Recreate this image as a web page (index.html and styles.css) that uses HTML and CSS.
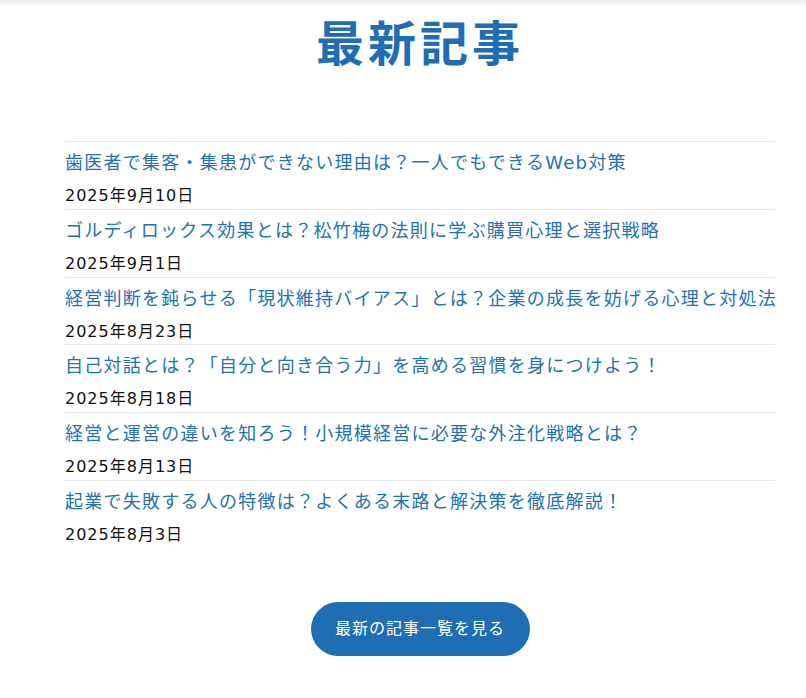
FILE: index.html
```html
<!DOCTYPE html>
<html lang="ja">

<head>
    <meta charset="UTF-8">
    <meta name="viewport" content="width=device-width, initial-scale=1.0">
    <title>最新記事</title>
    <link rel="stylesheet" href="styles.css">
</head>

<body>
    <div class="top-shade"></div>

    <section class="news">
        <h2 class="news-title">最新記事</h2>

        <!-- article list -->
        <ul class="news-list">
            <li class="news-item">
                <a class="news-link" href="#">歯医者で集客・集患ができない理由は？一人でもできるWeb対策</a>
                <span class="news-date">2025年9月10日</span>
            </li>
            <li class="news-item">
                <a class="news-link" href="#">ゴルディロックス効果とは？松竹梅の法則に学ぶ購買心理と選択戦略</a>
                <span class="news-date">2025年9月1日</span>
            </li>
            <li class="news-item">
                <a class="news-link" href="#">経営判断を鈍らせる「現状維持バイアス」とは？企業の成長を妨げる心理と対処法</a>
                <span class="news-date">2025年8月23日</span>
            </li>
            <li class="news-item">
                <a class="news-link" href="#">自己対話とは？「自分と向き合う力」を高める習慣を身につけよう！</a>
                <span class="news-date">2025年8月18日</span>
            </li>
            <li class="news-item">
                <a class="news-link" href="#">経営と運営の違いを知ろう！小規模経営に必要な外注化戦略とは？</a>
                <span class="news-date">2025年8月13日</span>
            </li>
            <li class="news-item">
                <a class="news-link" href="#">起業で失敗する人の特徴は？よくある末路と解決策を徹底解説！</a>
                <span class="news-date">2025年8月3日</span>
            </li>
        </ul>

        <div class="more">
            <a class="more-btn" href="#">最新の記事一覧を見る</a>
        </div>
    </section>
</body>

</html>
```

FILE: styles.css
```css
body {
    margin: 0;
    font-family: "DejaVu Sans", "Noto Sans CJK JP", sans-serif;
    background-color: #fff;
    color: #111;
}

.top-shade {
    height: 6px;
    background: linear-gradient(#ececec, #fff);
}

.news {
    padding: 0 31px 0 65px;
}

.news-title {
    margin: 2px 0 0;
    text-align: center;
    font-family: "Noto Sans CJK JP", sans-serif;
    font-size: 48px;
    font-weight: 700;
    letter-spacing: 4px;
    line-height: 64px;
    color: #1f6db3;
}

.news-list {
    list-style: none;
    margin: 69px 0 0;
    padding: 0;
}

.news-item {
    border-top: 1px solid #e8e8e8;
    height: 66.8px;
}

.news-link {
    display: block;
    padding-top: 8px;
    font-size: 18px;
    line-height: 26px;
    letter-spacing: 1.25px;
    color: #2271b1;
    text-decoration: none;
    white-space: nowrap;
}

.news-date {
    display: block;
    margin-top: 9px;
    font-size: 16px;
    line-height: 22px;
    letter-spacing: 1px;
}

.more {
    text-align: center;
    margin-top: 54px;
}

.more-btn {
    display: inline-block;
    width: 219px;
    line-height: 54px;
    border-radius: 27px;
    background-color: #1f6db3;
    color: #fff;
    font-size: 16px;
    letter-spacing: 1px;
    text-decoration: none;
}
```
